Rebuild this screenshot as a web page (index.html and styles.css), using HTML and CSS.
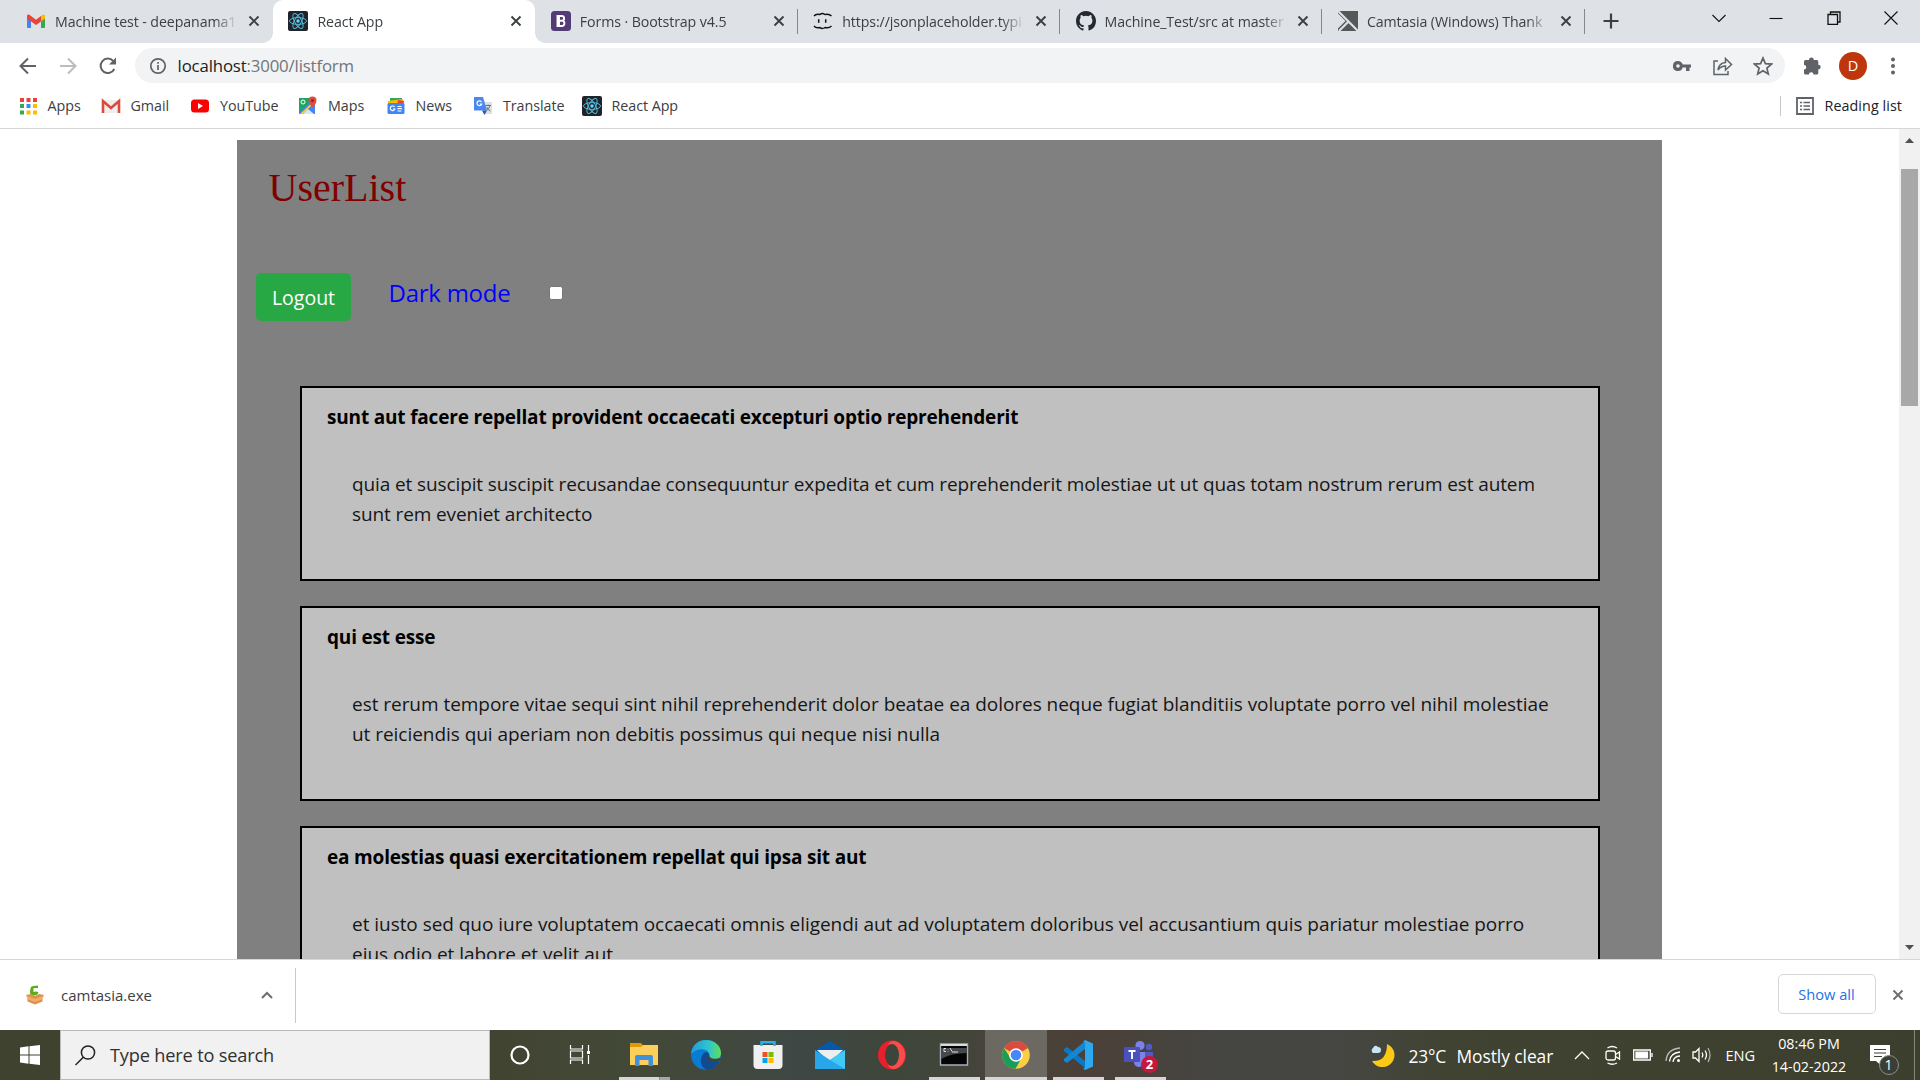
FILE: index.html
```html
<!DOCTYPE html>
<html lang="en">
<head>
<meta charset="utf-8">
<title>React App</title>
<link rel="stylesheet" href="styles.css">
</head>
<body>
<svg class="defs" width="0" height="0">
  <defs>
    <symbol id="x" viewBox="0 0 12 12"><path d="M1.5 1.5l9 9M10.500 1.500l-9 9" fill="none" stroke="currentColor" stroke-width="1.900"/></symbol>
    <symbol id="react" viewBox="0 0 20 20"><rect width="20" height="20" rx="2" fill="#20232a"/><g fill="none" stroke="#53b9d6" stroke-width="1"><ellipse cx="10" cy="10" rx="8.500" ry="3.400"/><ellipse cx="10" cy="10" rx="8.500" ry="3.400" transform="rotate(60 10 10)"/><ellipse cx="10" cy="10" rx="8.500" ry="3.400" transform="rotate(120 10 10)"/></g><circle cx="10" cy="10" r="1.700" fill="#61dafb"/></symbol>
  </defs>
</svg>
<div class="screen">
  <header class="tabs">
    <div class="tab"><svg class="fav" viewBox="0 0 20 20"><path d="M1 4.500v11.500q0 1 1 1h3V8z" fill="#4285f4"/><path d="M19 4.500v11.500q0 1-1 1h-3V8z" fill="#34a853"/><path d="M15 5l2-1.500q2-.5 2 1.500v2.500L15 10.500z" fill="#fbbc04"/><path d="M1 5q0-2 2-1.500L10 8.700 15 5v5.500L10 14 1 7.500z" fill="#ea4335"/></svg><span class="tt t1">Machine test - deepanama1</span><svg class="cl"><use href="#x"/></svg></div>
    <div class="tab active"><svg class="fav"><use href="#react"/></svg><span class="tt">React App</span><svg class="cl"><use href="#x"/></svg></div>
    <div class="tab sep"><svg class="fav" viewBox="0 0 20 20"><rect width="20" height="20" rx="3.500" fill="#533b78"/><path d="M6.500 5h4.300a2.400 2.400 0 0 1 .6 4.700 2.700 2.700 0 0 1-.5 5.300H6.500zM8 9.700h3M8 5v10" fill="none" stroke="#fff" stroke-width="1.900"/></svg><span class="tt">Forms · Bootstrap v4.5</span><svg class="cl"><use href="#x"/></svg></div>
    <div class="tab sep"><svg class="fav" viewBox="0 0 20 20"><path d="M1 5q2-2.500 6-1.500 2-2 5 0 4-1 6.500 1.500M1 15q2 2.500 6 1.500 2 2 5 0 4 1 6.500-1.500" fill="none" stroke="#111" stroke-width="1.400"/><path d="M5.700 8.300v3.400M12.700 8.300v3.400" stroke="#111" stroke-width="1.500"/></svg><span class="tt">https://jsonplaceholder.typi</span><svg class="cl"><use href="#x"/></svg></div>
    <div class="tab sep"><svg class="fav" viewBox="0 0 16 16"><path fill="#24292f" d="M8 0C3.580 0 0 3.580 0 8c0 3.540 2.290 6.530 5.470 7.590.4.070.55-.17.55-.38 0-.19-.01-.82-.01-1.490-2.010.37-2.530-.49-2.690-.94-.09-.23-.48-.94-.82-1.130-.28-.15-.68-.52-.01-.53.63-.01 1.080.58 1.230.82.72 1.210 1.870.87 2.330.66.070-.52.280-.87.510-1.070-1.780-.2-3.640-.89-3.640-3.950 0-.87.310-1.590.820-2.150-.080-.2-.360-1.020.080-2.120 0 0 .67-.21 2.200.82a7.500 7.500 0 0 1 4 0c1.530-1.040 2.200-.82 2.200-.82.440 1.100.160 1.920.080 2.120.510.560.820 1.270.820 2.150 0 3.070-1.870 3.750-3.650 3.950.29.25.54.73.54 1.480 0 1.070-.01 1.930-.01 2.200 0 .21.150.46.550.38A8 8 0 0 0 16 8c0-4.420-3.580-8-8-8z"/></svg><span class="tt">Machine_Test/src at master</span><svg class="cl"><use href="#x"/></svg></div>
    <div class="tab sep"><svg class="fav" viewBox="0 0 20 20"><path fill="#555759" d="M0 0h20v20H0z"/><path d="M0 2.500V17.500L7.500 10z" fill="#dee1e6"/><path d="M0 0l20 20M10.500 10.500L1 20" stroke="#dee1e6" stroke-width="2.200"/></svg><span class="tt">Camtasia (Windows) Thank</span><svg class="cl"><use href="#x"/></svg></div>
    <svg class="plus" viewBox="0 0 16 16"><path d="M8 .5v15M.5 8h15" stroke="#3c4043" stroke-width="2.200"/></svg>
    <div class="winctl">
      <svg viewBox="0 0 14 14"><path d="M.5 4l6.500 6.500L13.500 4" /></svg>
      <svg viewBox="0 0 14 14"><path d="M.5 7.500h13"/></svg>
      <svg viewBox="0 0 14 14"><path d="M1 3.500h9.500v10H1zM3.500 3.500V1h9.500v10h-2.500" stroke-width="1.300"/></svg>
      <svg viewBox="0 0 14 14"><path d="M.5 .5l13 13M13.500 .5l-13 13"/></svg>
    </div>
  </header>
  <nav class="toolbar">
    <svg class="nv" viewBox="0 0 20 20"><path d="M18 10H2.500M10 2.500L2.500 10l7.500 7.500" fill="none" stroke="#5f6368" stroke-width="2"/></svg>
    <svg class="nv" viewBox="0 0 20 20"><path d="M2 10h15.500M10 2.500l7.500 7.500-7.500 7.500" fill="none" stroke="#babcbe" stroke-width="2"/></svg>
    <svg class="nv" viewBox="0 0 20 20"><path d="M16.300 13A7.200 7.200 0 1 1 15.200 5" fill="none" stroke="#5f6368" stroke-width="2"/><path d="M18 1.500v7h-7z" fill="#5f6368"/></svg>
    <div class="omni">
      <svg class="info" viewBox="0 0 18 18"><circle cx="9" cy="9" r="7.200" fill="none" stroke="#5f6368" stroke-width="1.700"/><path d="M9 8v5M9 5v1.800" stroke="#5f6368" stroke-width="1.700"/></svg>
      <span class="url">localhost<i>:3000/listform</i></span>
      <svg class="key" viewBox="0 0 18 18"><path fill-rule="evenodd" d="M5 4a5 5 0 1 0 4.700 6.500H13V14h3.500v-3.500H18v-3H9.700A5 5 0 0 0 5 4zm0 3.200a1.800 1.800 0 1 1 0 3.600 1.800 1.800 0 0 1 0-3.600z" fill="#5f6368"/></svg>
      <svg class="shr" viewBox="0 0 20 20"><path d="M5 5H1v13.500h14V15M5 14q1-7 7.500-7.500V2.500L18.500 8.500l-6 5.500v-4Q8 10 5 14z" fill="none" stroke="#5f6368" stroke-width="1.500"/></svg>
      <svg class="star" viewBox="0 0 20 20"><path d="M10 2l2.400 5.600 6.100.5-4.600 4 1.400 5.900-5.300-3.200L4.700 18l1.400-5.900-4.600-4 6.100-.5z" fill="none" stroke="#5f6368" stroke-width="1.700"/></svg>
    </div>
    <svg class="puz" viewBox="0 0 20 20"><path fill="#5f6368" d="M2 5.500q0-1.500 1.500-1.500H7a2.400 2.400 0 1 1 4.800 0h3q1.500 0 1.500 1.500v3.200a2.400 2.400 0 1 1 0 4.800v3.500q0 1.500-1.500 1.500h-3.300a2.300 2.300 0 0 0-4.600 0H3.500Q2 18.500 2 17v-3.500a2.300 2.300 0 0 0 0-4.600z"/></svg>
    <div class="ava">D</div>
    <svg class="dots" viewBox="0 0 6 18"><g fill="#5f6368"><circle cx="3" cy="2.500" r="2"/><circle cx="3" cy="9" r="2"/><circle cx="3" cy="15.500" r="2"/></g></svg>
  </nav>
  <nav class="marks">
    <a class="m1"><svg viewBox="0 0 20 20"><path d="M1 2h4v4H1zM7.500 2h4v4h-4zM14 2h4v4h-4z" fill="#ea4335"/><path d="M1 8h4v4H1zM1 14.500h4v4H1z" fill="#34a853"/><path d="M7.500 8h4v4h-4z" fill="#4285f4"/><path d="M14 8h4v4h-4zM7.500 14.500h4v4h-4zM14 14.500h4v4h-4z" fill="#fbbc04"/></svg><span>Apps</span></a>
    <a class="m2"><svg viewBox="0 0 20 20"><path d="M1 4h18v13H1z" fill="#eee"/><path d="M2 17V5l8 7 8-7v12" fill="none" stroke="#dc4a3d" stroke-width="2.600"/></svg><span>Gmail</span></a>
    <a class="m3"><svg viewBox="0 0 20 20"><rect x="1" y="3.500" width="18" height="13" rx="3.500" fill="#f00"/><path d="M8 7v6l5-3z" fill="#fff"/></svg><span>YouTube</span></a>
    <a class="m4"><svg viewBox="0 0 20 20"><path d="M1 2h16v16H1z" fill="#4285f4"/><path d="M1 2h15L1 17z" fill="#1fa463"/><path d="M2 18L17 4v2L5 18z" fill="#fbd02f"/><path d="M5 18l5-5 6 5z" fill="#dfe5ee"/><path d="M14.500 12Q10.500 7 10.500 4.500a4 4 0 1 1 8 0Q18.500 7 14.500 12z" fill="#e04c40"/><circle cx="14.500" cy="4.500" r="1.500" fill="#8b2a22"/><circle cx="5" cy="6" r="2" fill="none" stroke="#fff"/></svg><span>Maps</span></a>
    <a class="m5"><svg viewBox="0 0 20 20"><path d="M4 2h12v7H4z" fill="#34a853"/><path d="M2 5l15-2 1 6H2z" fill="#fbbc04"/><path d="M12 4l6 1-1 5h-6z" fill="#ea4335"/><rect x="1.500" y="7" width="17" height="11" rx="1.500" fill="#4285f4"/><path d="M8.500 11a2.300 2.300 0 1 0 .3 2H7M11.500 10.500h4M11.500 12.700h4.500M11.500 15h4" fill="none" stroke="#fff" stroke-width="1.200"/></svg><span>News</span></a>
    <a class="m6"><svg viewBox="0 0 20 20"><path d="M8 6h11v12h-8z" fill="#dde0e4"/><path d="M1 1h9l4 13.500H1z" fill="#4c86ee"/><path d="M9 14.500h5L11.500 19z" fill="#3157b3"/><path d="M8.500 6a2.400 2.400 0 1 0 .2 2H6.800" fill="none" stroke="#fff" stroke-width="1.200"/><path d="M12.500 9.500H18M15.200 8.500v1M17 9.500q-1 4-3.500 5M13.700 11q1 3 3.800 4" fill="none" stroke="#687480" stroke-width="1"/></svg><span>Translate</span></a>
    <a class="m7"><svg><use href="#react"/></svg><span>React App</span></a>
    <div class="reading"><svg viewBox="0 0 18 18"><path d="M1 1h16v16H1z" fill="none" stroke="#5f6368" stroke-width="1.800"/><path d="M4 5.500h2M4 9h2M4 12.500h2M7.500 5.500H14M7.500 9H14M7.500 12.500H14" stroke="#5f6368" stroke-width="1.600"/></svg><span>Reading list</span></div>
  </nav>
  <main class="view">
    <section class="page">
      <h1>UserList</h1>
      <div class="controls"><button class="logout">Logout</button><label class="dark">Dark mode</label><span class="check"></span></div>
      <article class="card"><h2>sunt aut facere repellat provident occaecati excepturi optio reprehenderit</h2><p class="tight">quia et suscipit suscipit recusandae consequuntur expedita et cum reprehenderit molestiae ut ut quas totam nostrum rerum est autem<br>sunt rem eveniet architecto</p></article>
      <article class="card"><h2>qui est esse</h2><p>est rerum tempore vitae sequi sint nihil reprehenderit dolor beatae ea dolores neque fugiat blanditiis voluptate porro vel nihil molestiae<br>ut reiciendis qui aperiam non debitis possimus qui neque nisi nulla</p></article>
      <article class="card"><h2>ea molestias quasi exercitationem repellat qui ipsa sit aut</h2><p>et iusto sed quo iure voluptatem occaecati omnis eligendi aut ad voluptatem doloribus vel accusantium quis pariatur molestiae porro<br>eius odio et labore et velit aut</p></article>
    </section>
    <div class="scroll"><svg viewBox="0 0 9 5"><path d="M0 5L4.500 0 9 5z"/></svg><div class="thumb"></div><svg class="down" viewBox="0 0 9 5"><path d="M0 0h9L4.500 5z"/></svg></div>
  </main>
  <section class="shelf">
    <div class="file"><svg class="box" viewBox="0 0 20 20"><path d="M6 2q2-1.500 7-1.500L13 3H8.500v4q3-1 5 .5-1 3-4.500 3T5 8q0-4 1-6z" fill="#5cad1d"/><path d="M1 10l5-1 4 2 4-2 5 1-1.500 2v4.500L10 19.500 2.500 16.500V12z" fill="#dd914d"/><path d="M1 10.500L10 14l9-3.500-2 4-7 2.500-7-2.500z" fill="#f0ad69"/></svg><span>camtasia.exe</span><svg class="up" viewBox="0 0 12 8"><path d="M1 7l5-5 5 5" fill="none" stroke="#6a6e72" stroke-width="2"/></svg></div>
    <button class="all">Show all</button><svg class="sx"><use href="#x"/></svg>
  </section>
  <footer class="task">
    <div class="start"><svg width="20" height="20" viewBox="0 0 20 20"><path d="M0 2.500l8.500-1.200v8.200H0zM9.500 1.200L20 0v9.500H9.500zM0 10.500h8.500v8.200L0 17.500zM9.500 10.500H20V20L9.500 18.800z" fill="#fff"/></svg></div>
    <div class="search"><svg width="21" height="21" viewBox="0 0 21 21"><circle cx="13" cy="7.500" r="6.600" fill="none" stroke="#222" stroke-width="1.500"/><path d="M8.300 12.200L.5 20" stroke="#222" stroke-width="1.500"/></svg><span>Type here to search</span></div>
    <div class="app narrow"><svg viewBox="0 0 30 30"><circle cx="15" cy="15" r="8.500" fill="none" stroke="#fff" stroke-width="2.200"/></svg></div>
    <div class="app narrow"><svg viewBox="0 0 30 30"><path d="M5.500 5v4h12V5M5.500 24v-4h12v4M5.500 11h12v7h-12zM23.500 5v6M23.500 15v9" fill="none" stroke="#fff" stroke-width="1.200"/><path d="M22 11h3v3h-3z" fill="#fff"/></svg></div>
    <div class="app run group"><svg viewBox="0 0 30 30"><path d="M1 3h11l2 2.500V10H1z" fill="#dc9a06"/><path d="M1 7h11l2-2h15v20H1z" fill="#fccf5b"/><path d="M6 26V17q0-2 2-2h14q2 0 2 2v9h-4.500v-6h-9v6z" fill="#3d92db"/></svg></div>
    <div class="app"><svg viewBox="0 0 30 30"><defs><linearGradient id="eg"><stop stop-color="#219bde"/><stop offset=".6" stop-color="#2fc5cb"/><stop offset="1" stop-color="#62df54"/></linearGradient></defs><circle cx="15" cy="15" r="15" fill="#087bd2"/><path d="M0 14C1 5 7 0 15 0c9 0 15 6 15 13 0 5-4 7-8 7-3 0-5-1-4-3C21 10 8 5 0 14z" fill="url(#eg)"/><path d="M18 17c-1 3 3 5 10.500 4-2 5-7 9-13 9C9 27 8 18 13 13c3-2 6 0 5 4z" fill="#114a91"/><path d="M29.500 20c-2 2-8 2.500-11 .5-3-2-1-4-.5-5.500 1 3 3 5 12 3z" fill="#3e463a"/></svg></div>
    <div class="app"><svg viewBox="0 0 30 30"><path d="M.5 5h29v20q0 4-4 4h-21q-4 0-4-4z" fill="#f0f0f0"/><path d="M8.500 6V2.200h13V6" fill="none" stroke="#22b4ee" stroke-width="2.400"/><path d="M9.500 12h5v5h-5z" fill="#f25022"/><path d="M15.500 12h5v5h-5z" fill="#7fba00"/><path d="M9.500 18h5v5h-5z" fill="#00a4ef"/><path d="M15.500 18h5v5h-5z" fill="#ffb900"/></svg></div>
    <div class="app"><svg viewBox="0 0 30 30"><path d="M0 10l15-9 15 9v3H0z" fill="#0758a8"/><path d="M2 10h26l-13 13z" fill="#eee"/><path d="M0 10l15 10L30 10v19H0z" fill="#27a7e9"/><path d="M15 20l15-10v19z" fill="#42c9f6"/></svg></div>
    <div class="app"><svg viewBox="0 0 30 30"><ellipse cx="15" cy="15" rx="14" ry="14.500" fill="#e8202e"/><path d="M17 .8a14 14.500 0 0 1 0 28.400q-5-1-6-4 9 2 9-10T11 4.800Q12 1.500 17 .8z" fill="#f94c4c"/><ellipse cx="15" cy="15" rx="7" ry="11" fill="#3c4638"/></svg></div>
    <div class="app run"><svg viewBox="0 0 30 30"><path d="M1.500 4h27v21h-27z" fill="#050505" stroke="#a5b0bb" stroke-width="1.400"/><path d="M2 5h26" stroke="#d5dce2" stroke-width="2"/><path d="M2 8h26v5Q12 13 2 19z" fill="#46484b"/><path d="M7 8.500H5v3h2M9 9v.5M9 11v.5M11 8l2 3.500M13 12h6" stroke="#ddd" fill="none"/></svg></div>
    <div class="app run focus"><svg viewBox="0 0 30 30"><circle cx="15" cy="15" r="13.800" fill="#fcce46"/><path d="M15 15L3 8a13.800 13.800 0 0 1 24 0z" fill="#db4a3e"/><path d="M3 8a13.800 13.800 0 0 0 11.500 20.800L20.500 18H9.500z" fill="#199e58"/><circle cx="15" cy="15" r="6.800" fill="#fff"/><circle cx="15" cy="15" r="5.300" fill="#4788f4"/></svg></div>
    <div class="app run"><svg viewBox="0 0 30 30"><path d="M1 9l3-2 18 14v7L1 11z" fill="#0a78c4"/><path d="M1 21l3 2L22 9V1L1 19z" fill="#1587d2"/><path d="M22 0l8 3.500v23L22 30l-2-1.500q2 .5 2-2v-23Q22 1 20 1.500z" fill="#2ba8ee"/></svg></div>
    <div class="app run"><svg class="teams" viewBox="0 0 32 30"><circle cx="16" cy="5.500" r="4.600" fill="#7b83eb"/><circle cx="25" cy="7" r="3.200" fill="#5059c9"/><path d="M10 12h12v9q-2 6-8 6-4-1-4-5z" fill="#7b83eb"/><path d="M21 12h8v8q-3 4-8 3z" fill="#5059c9"/><rect y="7" width="16" height="15" rx="1" fill="#4951bc"/><path d="M4.500 11h7M8 11v8" stroke="#fff" stroke-width="1.900"/></svg><b class="badge">2</b></div>
    <div class="tray">
      <svg class="moon" viewBox="0 0 26 24"><path d="M17 1a12 12 0 1 1-15 17Q17 19 17 1z" fill="#fbc916"/><path d="M3 10a3 3 0 0 1 0-5q2-4 5-1 3 0 3 3 0 3-3 3z" fill="#c7e6f6"/></svg>
      <span class="temp">23°C</span><span class="sky">Mostly clear</span>
      <svg class="caret" viewBox="0 0 16 10"><path d="M1 9l7-7 7 7"/></svg>
      <svg class="meet" viewBox="0 0 16 20"><rect x="1" y="6" width="9.500" height="9" rx="2"/><path d="M10.500 9.500L14.500 7v7l-4-2.500M2.500 3Q7 0 12 3M2.500 18q4.500 2.500 9.500 0"/></svg>
      <svg class="bat" viewBox="0 0 20 12"><path d="M.7 1h16.600v10H.7zM19 4v4"/><path d="M3 3.200h11.500v5.600H3z" fill="#fff"/></svg>
      <svg class="wifi" viewBox="0 0 16 16"><path d="M1 14Q2 2 15 1" opacity=".65"/><path d="M4.500 14.500Q5 6 15 5M8 15q.500-5.500 7-6"/><circle cx="13.500" cy="13.500" r="1.500" fill="#fff" stroke="none"/></svg>
      <svg class="vol" viewBox="0 0 20 16"><path d="M1 5h2.500L7 1.500v13L3.500 11H1zM10 5.500q1.500 2.500 0 5M13 3.500q3 4.500 0 9"/><path d="M16 1q4 7 0 14" opacity=".6"/></svg>
      <span class="lang">ENG</span>
      <div class="clock"><span class="time">08:46 PM</span><span class="date">14-02-2022</span></div>
      <div class="notif"><svg viewBox="0 0 20 20"><path d="M0 0h20v16h-9.500v4L6 16H0z" fill="#fff"/><path d="M4 4.500h12M4 8h12M4 11.500h8" stroke="#3e4130" stroke-width="1.200"/></svg><b>1</b></div>
    </div>
  </footer>
</div>
</body>
</html>
```
FILE: styles.css
```css
* { box-sizing: border-box; }
body { margin: 0; font-family: "Open Sans", "Noto Sans", sans-serif; background: #fff; }
.defs { display: block; position: absolute; }
svg { display: block; flex: none; }
.screen { width: 1920px; height: 1080px; display: flex; flex-direction: column; overflow: hidden; white-space: nowrap; }

/* tab strip */
.tabs { height: 43px; flex: none; background: #dee1e6; display: flex; align-items: stretch; padding-left: 10.500px; color: #3c4043; }
.tab { width: 262.400px; display: flex; align-items: center; padding: 0 13px 1px 15.500px; position: relative; font-size: 14.200px; letter-spacing: -0.100px; }
.tab.active { background: #fff; border-radius: 10px 10px 0 0; }
.tab.active::before, .tab.active::after { content: ""; position: absolute; bottom: 0; width: 10px; height: 10px; }
.tab.active::before { left: -10px; background: radial-gradient(circle at 0 0, transparent 9.500px, #fff 10px); }
.tab.active::after { right: -10px; background: radial-gradient(circle at 100% 0, transparent 9.500px, #fff 10px); }
.tab.sep::after { content: ""; position: absolute; right: 0; top: 9px; width: 1px; height: 25px; background: #84878c; }
.fav { width: 20px; height: 20px; margin-right: 9px; }
.tt { width: 183px; overflow: hidden; -webkit-mask-image: linear-gradient(to right, #000 160px, transparent 183px); mask-image: linear-gradient(to right, #000 160px, transparent 183px); }
.cl { width: 12px; height: 12px; margin-left: 10px; }
.plus { width: 16px; height: 16px; margin: 13px 0 0 18.500px; }
.winctl { display: flex; gap: 43.300px; margin: 11px 22px 0 auto; }
.winctl svg { width: 14px; height: 14px; fill: none; stroke: #111; stroke-width: 1.100; }

/* toolbar */
.toolbar { height: 43px; flex: none; display: flex; align-items: center; padding: 2px 0 0 17.500px; }
.nv { width: 20px; height: 20px; margin-right: 20.200px; }
.omni { width: 1650px; height: 35px; margin-left: -3px; border-radius: 18px; background: #f1f3f4; display: flex; align-items: center; padding: 0 12.500px 0 13.500px; }
.info { width: 18px; height: 18px; }
.url { margin-left: 11px; font-size: 16.800px; color: #202124; flex: 1; letter-spacing: -0.150px; }
.url i { font-style: normal; color: #70757a; }
.key { width: 18px; height: 18px; margin-right: 22px; }
.shr { width: 20px; height: 20px; margin-right: 20px; }
.star { width: 20px; height: 20px; }
.puz { width: 20px; height: 20px; margin-left: 17px; }
.ava { width: 28px; height: 28px; margin-left: 17px; border-radius: 50%; background: #bf360c; color: #fff; font-size: 14.500px; display: flex; align-items: center; justify-content: center; }
.dots { width: 6px; height: 18px; margin-left: 22.500px; }

/* bookmarks */
.marks { height: 43px; flex: none; display: flex; align-items: center; padding: 0 18px 3px 18.500px; border-bottom: 1px solid #d5d7da; font-size: 14.300px; letter-spacing: -0.050px; color: #3c4043; }
.marks a { display: flex; align-items: center; gap: 10px; }
.marks .m1 { gap: 9px; }
.marks a svg { width: 20px; height: 20px; }
.m1 { width: 82px; }
.m2 { width: 89.500px; }
.m3 { width: 108px; }
.m4 { width: 87.500px; }
.m5 { width: 87.500px; }
.m6 { width: 108.500px; }
.reading { display: flex; align-items: center; gap: 11px; margin-left: auto; height: 20px; border-left: 1px solid #c6c9cc; padding-left: 15px; color: #202124; }
.reading span { letter-spacing: 0.080px; }
.reading svg { width: 18px; height: 18px; }

/* document */
.view { height: 830px; flex: none; display: flex; justify-content: space-between; overflow: hidden; }
.page { margin: 11px 0 0 237px; width: 1425px; background: #808080; padding: 24px 62px 0 63px; height: 930px; }
.page h1 { margin: 0 0 0 -31.500px; font: 400 40px/48px "Liberation Serif", serif; color: #800000; }
.controls { display: flex; align-items: flex-start; margin: 61px 0 65px -44px; height: 48px; }
.logout { width: 95px; height: 48px; border: 0; border-radius: 5px; background: #28a745; color: #fff; font: 500 19.500px/46px "Open Sans", sans-serif; padding: 1px 0 0; }
.dark { margin: 5px 0 0 37.500px; width: 160px; font-size: 24px; line-height: 30px; letter-spacing: -0.250px; color: #00f; }
.check { width: 14px; height: 14px; margin-top: 13px; background: #fff; border: 1px solid #767676; border-radius: 2.500px; }
.card { height: 195px; border: 2px solid #000; background: #c0c0c0; margin-bottom: 25px; padding: 14px 0 0 25px; font-size: 19px; line-height: 30px; color: #000; }
.card h2 { margin: 0 0 37px; font-size: 19px; font-weight: 700; line-height: 30px; letter-spacing: -0.180px; }
.card p { margin: 0 0 0 25px; color: #161616; letter-spacing: -0.040px; }
.card .tight { letter-spacing: -0.112px; }
.scroll { width: 21px; background: #f1f1f1; display: flex; flex-direction: column; align-items: center; padding: 9px 0; }
.scroll svg { width: 9px; height: 5px; fill: #505050; }
.thumb { width: 17px; height: 237px; margin-top: 26px; background: #a8a8a8; }
.scroll .down { margin-top: auto; }

/* downloads */
.shelf { height: 71px; flex: none; border-top: 1px solid #d5d7da; display: flex; align-items: center; padding-right: 16.500px; }
.file { width: 296px; height: 55px; border-right: 1px solid #c6c9cc; display: flex; align-items: center; padding-left: 25px; font-size: 15px; color: #3c4043; }
.box { width: 20px; height: 20px; margin-right: 16px; }
.up { width: 12px; height: 8px; margin: 0 22px 0 auto; }
.all { margin: 0 15.500px 2px auto; width: 98px; height: 40px; background: #fff; border: 1px solid #d5d7db; border-radius: 5px; color: #1a73e8; font: 500 14.600px "Open Sans", sans-serif; padding: 0 1px 1px 0; }
.sx { width: 12px; height: 12px; margin-bottom: 1px; color: #6a6e72; }

/* taskbar */
.task { height: 50px; flex: none; display: flex; color: #fff; background: linear-gradient(90deg, #404230 0, #424432 500px, #434937 640px, #3e4744 800px, #3e463a 900px, #46443a 1000px, #4b4037 1080px, #454542 1220px, #464642 1340px, #404331 1450px, #3c3f2d 1920px); }
.start { width: 60px; display: grid; place-items: center; }
.search { width: 430px; background: #f1f1f1; border: 1px solid #b9b9b9; display: flex; align-items: center; padding-left: 14px; color: #303030; font-size: 18.200px; letter-spacing: -0.180px; }
.search span { margin-left: 14px; }
.app { width: 62px; height: 50px; padding-bottom: 0; display: flex; align-items: center; justify-content: center; position: relative; }
.app.narrow { width: 60px; }
.app.narrow + .narrow { margin-right: 3px; }
.app svg { width: 30px; height: 30px; }
.app .teams { width: 32px; }
.run::after { content: ""; position: absolute; left: 6px; right: 5px; bottom: 0; height: 3px; background: #d8d4d8; }
.group::after { right: 5px; background: linear-gradient(90deg, #d8d4d8 40px, #78786f 40px, #a7a6a8 41px); }
.focus { background: #6b6961; }
.focus::after { left: 0; right: 0; }
.badge { position: absolute; left: 32px; top: 26px; width: 17px; height: 17px; border-radius: 50%; background: #c4183c; font-size: 13px; line-height: 17px; text-align: center; }
.tray { margin-left: auto; width: 545.500px; display: flex; align-items: center; border-right: 1px solid #85877b; margin-right: 5px; }
.tray svg { fill: none; stroke: #fff; stroke-width: 1.300; }
.tray .moon { width: 26px; height: 24px; stroke: none; margin-bottom: 1px; }
.temp, .sky { font-size: 17.400px; margin-top: 1px; }
.temp { width: 48px; margin-left: 13px; letter-spacing: -0.200px; }
.sky { width: 117px; letter-spacing: -0.060px; }
.caret { width: 16px; height: 10px; margin-right: 15px; }
.meet { width: 16px; height: 20px; margin-right: 12px; }
.bat { width: 20px; height: 12px; margin-right: 12px; }
.wifi { width: 16px; height: 16px; margin-right: 11px; }
.vol { width: 20px; height: 16px; margin-right: 14px; }
.lang { width: 45px; font-size: 14.600px; margin-top: 0; }
.clock { display: flex; flex-direction: column; width: 76px; text-align: center; align-items: center; font-size: 14.300px; line-height: 23px; margin: -1px 0 0 0.500px; }
.notif { margin-left: 22.500px; width: 20px; height: 20px; position: relative; }
.notif svg { width: 20px; height: 20px; }
.tray .notif svg { stroke: none; }
.notif b { position: absolute; left: 9px; top: 10px; width: 20px; height: 20px; border-radius: 50%; background: #3b3d37; border: 1px solid #8e8e8b; font-weight: 400; font-size: 14px; line-height: 18px; text-align: center; }
```
